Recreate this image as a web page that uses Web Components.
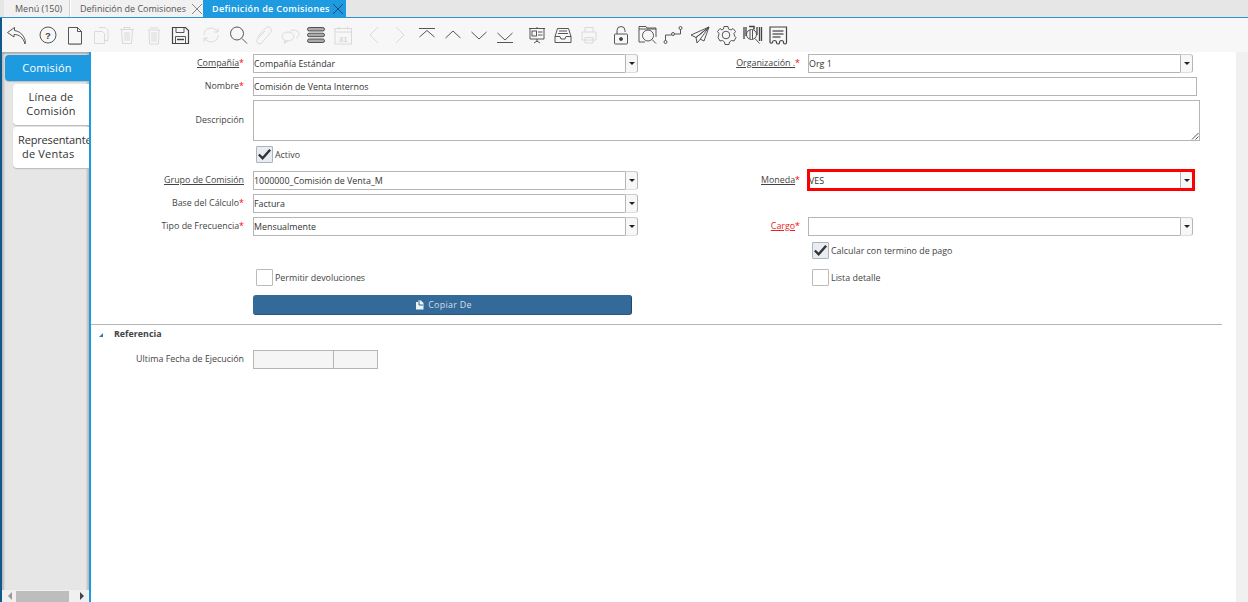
<!DOCTYPE html>
<html lang="es">
<head>
<meta charset="utf-8">
<title>Definición de Comisiones</title>
<style>
 html, body { margin: 0; height: 100%; overflow: hidden; }
 body { font: 9px 'Open Sans', 'Noto Sans', sans-serif; color: #333; background: #fff; }
 #app { display: flex; flex-direction: column; height: 602px; width: 1248px; }
 #main { display: flex; flex: 1; min-height: 0; }
</style>
</head>
<body>
<div id="app">
 <window-tabs></window-tabs>
 <tool-bar></tool-bar>
 <div id="main">
  <side-tabs></side-tabs>
  <form-panel>
   <form-row style="margin-top:2px">
    <field-label link req>Compañía</field-label><combo-box value="Compañía Estándar"></combo-box>
    <field-label style="padding-right:8px" link req>Organización .</field-label><combo-box value="Org 1"></combo-box>
   </form-row>
   <form-row style="margin-top:4px">
    <field-label req>Nombre</field-label><text-box value="Comisión de Venta Internos"></text-box>
   </form-row>
   <form-row style="margin-top:4px">
    <field-label tall>Descripción</field-label><area-box></area-box>
   </form-row>
   <form-row style="margin-top:3px">
    <span></span><check-box checked>Activo</check-box>
   </form-row>
   <form-row style="margin-top:7px">
    <field-label link>Grupo de Comisión</field-label><combo-box value="1000000_Comisión de Venta_M"></combo-box>
    <field-label style="padding-right:8px" link req>Moneda</field-label><combo-box marked value="VES"></combo-box>
   </form-row>
   <form-row style="margin-top:4px">
    <field-label req>Base del Cálculo</field-label><combo-box value="Factura"></combo-box>
   </form-row>
   <form-row style="margin-top:4px">
    <field-label req>Tipo de Frecuencia</field-label><combo-box value="Mensualmente"></combo-box>
    <field-label style="padding-right:8px" link req alert>Cargo</field-label><combo-box value=""></combo-box>
   </form-row>
   <form-row style="margin-top:4px">
    <span></span><span></span><span></span><check-box style="padding-left:4px" checked>Calcular con termino de pago</check-box>
   </form-row>
   <form-row style="margin-top:7px">
    <span></span><check-box>Permitir devoluciones</check-box><span></span><check-box style="padding-left:4px">Lista detalle</check-box>
   </form-row>
   <form-row style="margin-top:8px">
    <span></span><copy-button>Copiar De</copy-button>
   </form-row>
   <group-head>Referencia</group-head>
   <form-row style="margin-top:10px">
    <field-label>Ultima Fecha de Ejecución</field-label><date-box></date-box>
   </form-row>
  </form-panel>
 </div>
</div>

<script>
class WindowTabs extends HTMLElement {
 constructor() {
  super();
  this.attachShadow({ mode: 'open' });
 }

 connectedCallback() {
  const closeIcon = (color) => `<svg width="12" height="12" viewBox="0 0 12 12"><path d="M1 1l10 10M11 1L1 11" stroke="${color}" stroke-width="1" fill="none"/></svg>`;
  this.shadowRoot.innerHTML = `
   <style>
    :host { display: flex; height: 17px; background: #e6e6e6; border-bottom: 1px solid #2b95d3; flex: none; }
    .tab { display: flex; align-items: center; height: 17px; box-sizing: border-box; background: #f1f1f1; color: #555; font-size: 9px; white-space: nowrap; }
    .menu { width: 66px; margin-left: 4px; padding-left: 11px; border-right: 1px solid #d2d2d2; }
    .second { width: 133px; padding-left: 9px; justify-content: space-between; padding-right: 0; border-left: 1px solid #fff; }
    .active { width: 143px; padding-left: 9px; justify-content: space-between; padding-right: 2px; background: #1e9be0; color: #fff; letter-spacing: .35px; font-weight: 600; }
    svg { display: block; flex: none; }
   </style>
   <div class="tab menu">Menú (150)</div>
   <div class="tab second">Definición de Comisiones ${closeIcon('#888')}</div>
   <div class="tab active">Definición de Comisiones ${closeIcon('#1d4a66')}</div>
  `;
 }
}

const ICONS = {
 undo: '<path d="M8.500 3.500L1.500 8.500l6.500 4.500V10.500c5 0 9 2.500 11 9.500 1-2 0-5-1.500-7.500C15.500 9 12 7 8.500 6.500z" fill="none"/>',
 help: '<circle cx="11" cy="11" r="8" fill="none"/><text x="11" y="14.500" text-anchor="middle" font-size="9.500" font-weight="700" font-family="Liberation Sans" stroke="none" fill="currentColor">?</text>',
 page: '<path d="M4.500 3.500h9l4 4v12.500h-13z" fill="none"/><path d="M13.500 3.500v4h4" fill="none"/><path d="M5 20.500h12" stroke="#888"/>',
 copy: '<path d="M9 3.500h6l3 3v10h-3M4.500 7.500h8l2 2v10h-10z" fill="none"/>',
 trash: '<path d="M4 5.500h14M8 5.500v-2h6v2M5.500 5.500l1 14h9l1-14M9 8v9M11 8v9M13 8v9" fill="none"/>',
 trash2: '<path d="M5 6h12M7 4h8M6 6l.5 14h9l.5-14M9 8v10M11 8v10M13 8v10" fill="none"/>',
 save: '<path d="M3.500 3.500h13l3 3v13h-16z" fill="none" stroke-width="1.200"/><path d="M7 3.500v5h8v-5M6.500 19.500v-7h10v7" fill="none"/><path d="M8 15.500h7" stroke-width="1.500"/>',
 refresh: '<path d="M4 11a7 7 0 0 1 12-5l2 2M18 4v4h-4M18 11a7 7 0 0 1-12 5l-2-2M4 18v-4h4" fill="none"/>',
 find: '<circle cx="10" cy="9.500" r="6.500" fill="none"/><path d="M15 14.500l5 5"/>',
 clip: '<path d="M4.500 13L12.500 4c2.800-3 8 .8 5 4.500L9 18.500c-2.300 2.800-7 .2-4.800-3.200L12 7" fill="none"/>',
 chat: '<ellipse cx="9" cy="12.500" rx="6" ry="4.500" fill="none"/><path d="M6 16.500l-1 3 4-2.500M11 7c3-2 9-1 9 3 0 2-1 3-3 4" fill="none"/>',
 lines: '<rect x="2.500" y="3.500" width="17" height="3.500" rx="1.700" fill="#aaa"/><rect x="2.500" y="9.200" width="17" height="3.500" rx="1.700" fill="#aaa"/><rect x="2.500" y="15" width="17" height="3.500" rx="1.700" fill="#aaa"/>',
 calendar: '<rect x="3" y="4.500" width="16.500" height="15.500" fill="none"/><path d="M3 8h16.500M7 2.500v3M15.500 2.500v3" fill="none"/><text x="11.200" y="17.500" text-anchor="middle" font-size="8" font-weight="700" font-family="Liberation Sans" stroke="none" fill="currentColor">31</text>',
 prev: '<path d="M15 3l-8 8 8 8" fill="none"/>',
 next: '<path d="M7 3l8 8-8 8" fill="none"/>',
 first: '<path d="M3 4.500h16M3.500 13L11 6.500l7.500 6.500" fill="none"/>',
 up: '<path d="M3.500 14L11 7l7.500 7" fill="none"/>',
 down: '<path d="M3.500 8L11 15l7.500-7" fill="none"/>',
 last: '<path d="M3 18.500h16M3.500 9l7.500 7 7.500-7" fill="none"/>',
 report: '<path d="M3 4.500h16M4 4.500v10.500h14V4.500M11 3v1.500M11 15v3M8 19l3-2 3 2" fill="none"/><rect x="6" y="7" width="4.500" height="5" fill="none"/><path d="M12 8h4.500M12 11h4.500" fill="none"/>',
 archive: '<path d="M5.500 4.500h11l2.500 8v6H3v-6zM3 12.500h5l1 2.500h4l1-2.500h5M7 7h8M6 9.500h10" fill="none"/>',
 print: '<path d="M7 8V3.500h8V8M4 8h14v8H4zM7 13.500h8V19H7z" fill="none"/>',
 lock: '<path d="M7 10V6.500a4 4 0 0 1 8 0V8" fill="none"/><rect x="4.500" y="10" width="13" height="10" rx="1" fill="none"/><circle cx="11" cy="15" r="1.500" fill="currentColor"/>',
 zoomAcross: '<path d="M3 4V2.500h7l1 1.500h9v9M3 4v14h6M3 5h17" fill="none"/><circle cx="12" cy="11.500" r="5.500" fill="none"/><path d="M16 15.500l4 4"/>',
 route: '<circle cx="3.500" cy="18" r="1.500" fill="none"/><circle cx="11" cy="10" r="1.500" fill="none"/><circle cx="18.500" cy="4" r="1.500" fill="none"/><path d="M3.500 16.500V11H9.500M12.500 10H18.500V5.500" fill="none"/>',
 send: '<path d="M20 3L2 11l5 2.500zM20 3L7 13.500l1 5.500 3-3.500zM20 3l-5 14-4-2" fill="none"/>',
 gear: '<path d="M9 2.500h4l.5 2.500 2.500 1 2-1.500 2.500 3-1.500 2 .5 2.500 1.500 1.500-2 3.500-2.500-.5-2 1.500-.5 2.500h-4l-.5-2.500-2-1.500-2.500.5-2-3.500L3.500 12l.5-2.500L2.500 7.500 5 4.500l2 1.500L8.500 5z" fill="none"/><circle cx="11" cy="11" r="3.800" fill="none"/>',
 barcode: '<path d="M3 3v12M5 3v9M16 3v8M18.500 3v14M20.500 3v14" stroke-width="1.300"/><circle cx="10.500" cy="10.500" r="5" fill="none"/><path d="M9 6v9M11.500 6v9"/><path d="M14 14.500l4.500 5"/><path d="M8 2.500h5v3" fill="none" stroke-width="1.500"/>',
 receipt: '<path d="M3 3h16.500v15.500a1.500 1.500 0 0 1-3 0 2 2 0 0 0-4 0 1.500 1.500 0 0 1-3 0 2 2 0 0 0-4 0 1.500 1.500 0 0 1-2.500 0z" fill="none" stroke-width="1.200"/><path d="M5.500 7h11M5.500 10h11M5.500 13h8" stroke-width="1.300" stroke="#666"/>'
};

// name, disabled, extra space before
const TOOLS = [
 ['undo', 0, 0], ['help', 0, 5], ['page', 0, 0], ['copy', 1, 0], ['trash', 1, 0], ['trash2', 1, 0], ['save', 0, 0],
 ['refresh', 1, 5], ['find', 0, 0], ['clip', 1, 0], ['chat', 1, 0], ['lines', 0, 0], ['calendar', 1, 0],
 ['prev', 1, 5], ['next', 1, 0], ['first', 0, 0], ['up', 0, 0], ['down', 0, 0], ['last', 0, 0],
 ['report', 0, 5], ['archive', 0, 0], ['print', 1, 0],
 ['lock', 0, 5], ['zoomAcross', 0, 0], ['route', 0, 0], ['send', 0, 0], ['gear', 0, 0], ['barcode', 0, 0], ['receipt', 0, 0]
];

class ToolBar extends HTMLElement {
 constructor() {
  super();
  this.attachShadow({ mode: 'open' });
 }

 connectedCallback() {
  const buttons = TOOLS.map(([name, off, space]) => `
   <span class="btn ${off ? 'off' : ''}" style="margin-left:${space}px">
    <svg width="22" height="22" viewBox="0 0 22 22" stroke="currentColor" stroke-width=".9" fill="none">${ICONS[name]}</svg>
   </span>`).join('');
  this.shadowRoot.innerHTML = `
   <style>
    :host { display: flex; align-items: center; height: 34px; flex: none; background: #f7f7f7; box-sizing: border-box; border-left: 2px solid #0e5a8c; padding-left: 2px; }
    .btn { width: 26.3px; height: 22px; display: flex; justify-content: center; color: #444; flex: none; }
    .off { color: #d6d6d6; }
    svg { display: block; }
   </style>
   ${buttons}
  `;
 }
}

class SideTabs extends HTMLElement {
 constructor() {
  super();
  this.attachShadow({ mode: 'open' });
 }

 connectedCallback() {
  this.shadowRoot.innerHTML = `
   <style>
    :host { display: flex; flex-direction: column; flex: none; width: 91px; height: 100%; box-sizing: border-box; background: #e6e6e6; border-left: 2px solid #0e5a8c; border-right: 2px solid #1e9be0; font-size: 11px; letter-spacing: .2px; box-shadow: inset 3px 0 2px -1px #bbb, inset -3px 0 2px -1px #bbb; }
    .list { flex: 1; min-height: 0; padding-top: 3px; display: flex; flex-direction: column; gap: 2px; overflow: hidden; box-shadow: inset 0 3px 2px -1px #aaa; }
    .tab { box-sizing: border-box; margin-left: 11px; height: 41px; width: 76px; padding-bottom: 1px; background: #fff; border-radius: 4px 0 0 4px; display: flex; flex-direction: column; justify-content: center; align-items: center; line-height: 14px; color: #333; white-space: nowrap; overflow: hidden; box-shadow: 0 1px 1px #bbb; }
    .on { margin-left: 3px; width: 84px; height: 26px; background: #1e9be0; color: #fff; margin-bottom: 1px; }
    .clip { align-items: flex-start; padding-left: 5px; letter-spacing: -.15px; }
    .clip span:last-child { margin-left: 4px; letter-spacing: .2px; }
    .bar { height: 12px; flex: none; background: #f0f0f0; display: flex; align-items: center; padding-left: 14px; }
    .thumb { width: 53px; height: 11px; background: #bdbdbd; }
    .arrow { width: 0; height: 0; border-style: solid; border-width: 4px 0 4px 4px; border-color: transparent transparent transparent #444; margin-left: 11px; }
    .arrow.left { border-width: 4px 4px 4px 0; border-color: transparent #999 transparent transparent; margin: 0 4px 0 -8px; }
   </style>
   <div class="list">
    <div class="tab on">Comisión</div>
    <div class="tab"><span>Línea de</span><span>Comisión</span></div>
    <div class="tab clip"><span>Representante</span><span>de Ventas</span></div>
   </div>
   <div class="bar"><span class="arrow left"></span><span class="thumb"></span><span class="arrow"></span></div>
  `;
 }
}

class FormPanel extends HTMLElement {
 constructor() {
  super();
  this.attachShadow({ mode: 'open' });
  this.shadowRoot.innerHTML = `
   <style>
    :host { display: flex; flex: 1; min-width: 0; height: 100%; background: #fff; }
    .body { flex: 1; min-width: 0; display: block; }
    .rail { width: 12px; flex: none; background: #f0f0f0; }
   </style>
   <div class="body"><slot></slot></div>
   <div class="rail"></div>
  `;
 }
}

class FormRow extends HTMLElement {
 constructor() {
  super();
  this.attachShadow({ mode: 'open' });
  this.shadowRoot.innerHTML = `
   <style>
    :host { display: grid; grid-template-columns: 162px 385px 170px 385px; align-items: start; }
   </style>
   <slot></slot>
  `;
 }
}

class FieldLabel extends HTMLElement {
 constructor() {
  super();
  this.attachShadow({ mode: 'open' });
 }

 connectedCallback() {
  const link = this.hasAttribute('link');
  const req = this.hasAttribute('req');
  const alert = this.hasAttribute('alert');
  const tall = this.hasAttribute('tall');
  this.shadowRoot.innerHTML = `
   <style>
    :host { display: block; text-align: right; padding-right: 9px; font-size: 8.9px; line-height: 17px; color: ${alert ? '#e8231c' : '#444'}; white-space: nowrap; ${tall ? 'padding-top: 11px;' : ''} }
    .t { ${link ? 'text-decoration: underline;' : ''} }
    i { color: #f00; font-style: normal; }
   </style>
   <span class="t"><slot></slot></span>${req ? '<i>*</i>' : ''}
  `;
 }
}

class ComboBox extends HTMLElement {
 constructor() {
  super();
  this.attachShadow({ mode: 'open' });
 }

 connectedCallback() {
  const mark = this.hasAttribute('marked') ? '<span class="mark"></span>' : '';
  this.shadowRoot.innerHTML = `
   <style>
    :host { display: flex; position: relative; height: 19px; width: 385px; box-sizing: border-box; font-size: 8.9px; color: #333; }
    .val { flex: 1; border: 1px solid #b5b5b5; border-right: 0; background: #fff; line-height: 17px; white-space: nowrap; }
    .btn { width: 13px; box-sizing: border-box; background: #f7f7f7; border: 1px solid #b5b5b5; border-radius: 0 3px 3px 0; border-top-color: #ccc; border-bottom-color: #ddd; display: flex; align-items: center; justify-content: center; }
    .btn::before { content: ''; border: 3px solid transparent; border-top-color: #222; border-bottom: 0; }
    .mark { position: absolute; left: -1px; top: -2px; right: -2px; bottom: -1px; border: 3px solid #f00; pointer-events: none; }
   </style>
   <span class="val">${this.getAttribute('value')}</span><span class="btn"></span>${mark}
  `;
 }
}

class TextBox extends HTMLElement {
 constructor() {
  super();
  this.attachShadow({ mode: 'open' });
 }

 connectedCallback() {
  this.shadowRoot.innerHTML = `
   <style>
    :host { display: block; grid-column: 2 / 5; width: 944px; height: 19px; box-sizing: border-box; border: 1px solid #b5b5b5; font-size: 8.9px; line-height: 17px; color: #333; }
   </style>
   ${this.getAttribute('value')}
  `;
 }
}

class AreaBox extends HTMLElement {
 constructor() {
  super();
  this.attachShadow({ mode: 'open' });
  this.shadowRoot.innerHTML = `
   <style>
    :host { display: flex; align-items: flex-end; justify-content: flex-end; grid-column: 2 / 5; width: 947px; height: 41px; box-sizing: border-box; border: 1px solid #b5b5b5; }
    svg { display: block; }
   </style>
   <svg width="8" height="8" viewBox="0 0 8 8"><path d="M1 7.500L7.500 1M4.500 7.500L7.500 4.500" stroke="#555" stroke-width="1" fill="none"/></svg>
  `;
 }
}

class CheckBox extends HTMLElement {
 constructor() {
  super();
  this.attachShadow({ mode: 'open' });
 }

 connectedCallback() {
  const on = this.hasAttribute('checked');
  this.shadowRoot.innerHTML = `
   <style>
    :host { display: flex; align-items: center; gap: 2px; height: 20px; padding-left: 3px; font-size: 8.9px; color: #444; white-space: nowrap; }
    .box { width: 15px; height: 15px; border: 1px solid ${on ? '#a9b4bd' : '#bbb'}; background: ${on ? '#e9edf1' : '#fff'}; border-radius: 1px; flex: none; display: block; }
    svg { display: block; }
   </style>
   <span class="box">${on ? '<svg width="15" height="15" viewBox="0 0 16 16"><path d="M2 8l4 4 8-9" stroke="#333" stroke-width="2.600" fill="none"/></svg>' : ''}</span>
   <span><slot></slot></span>
  `;
 }
}

class CopyButton extends HTMLElement {
 constructor() {
  super();
  this.attachShadow({ mode: 'open' });
  this.shadowRoot.innerHTML = `
   <style>
    :host { display: flex; align-items: center; justify-content: center; gap: 4px; width: 379px; height: 20px; box-sizing: border-box; padding-left: 3px; background: #336a9a; border-right: 1px solid #20486c; border-bottom: 1px solid #2a587f; border-radius: 3px; color: #d5dee6; font-size: 8.9px; letter-spacing: .3px; }
    svg { display: block; }
   </style>
   <svg width="9" height="10" viewBox="0 0 9 10"><path d="M1 2h2V.500h3L8.500 3v6.500H1z" fill="#eef2f5"/><path d="M4 1v4h4" stroke="#336a9a" fill="none"/></svg>
   <span><slot></slot></span>
  `;
 }
}

class GroupHead extends HTMLElement {
 constructor() {
  super();
  this.attachShadow({ mode: 'open' });
  this.shadowRoot.innerHTML = `
   <style>
    :host { display: flex; align-items: center; width: 1131px; height: 16px; margin-top: 9px; box-sizing: border-box; border-top: 1px solid #b5b5b5; padding: 1px 0 0 8px; font-size: 8.900px; font-weight: 700; color: #444; }
    .tri { width: 0; height: 0; border-style: solid; border-width: 0 0 4px 4px; border-color: transparent transparent #2b7cc4 transparent; margin: 4px 11px 0 0; }
   </style>
   <span class="tri"></span><span><slot></slot></span>
  `;
 }
}

class DateBox extends HTMLElement {
 constructor() {
  super();
  this.attachShadow({ mode: 'open' });
  this.shadowRoot.innerHTML = `
   <style>
    :host { display: flex; height: 19px; }
    span { display: block; box-sizing: border-box; height: 19px; background: #f5f5f5; border: 1px solid #b5b5b5; }
    .d { width: 81px; }
    .h { width: 44px; border-left: 0; }
   </style>
   <span class="d"></span><span class="h"></span>
  `;
 }
}

customElements.define('window-tabs', WindowTabs);
customElements.define('tool-bar', ToolBar);
customElements.define('side-tabs', SideTabs);
customElements.define('form-panel', FormPanel);
customElements.define('form-row', FormRow);
customElements.define('field-label', FieldLabel);
customElements.define('combo-box', ComboBox);
customElements.define('text-box', TextBox);
customElements.define('area-box', AreaBox);
customElements.define('check-box', CheckBox);
customElements.define('copy-button', CopyButton);
customElements.define('group-head', GroupHead);
customElements.define('date-box', DateBox);
</script>
</body>
</html>
